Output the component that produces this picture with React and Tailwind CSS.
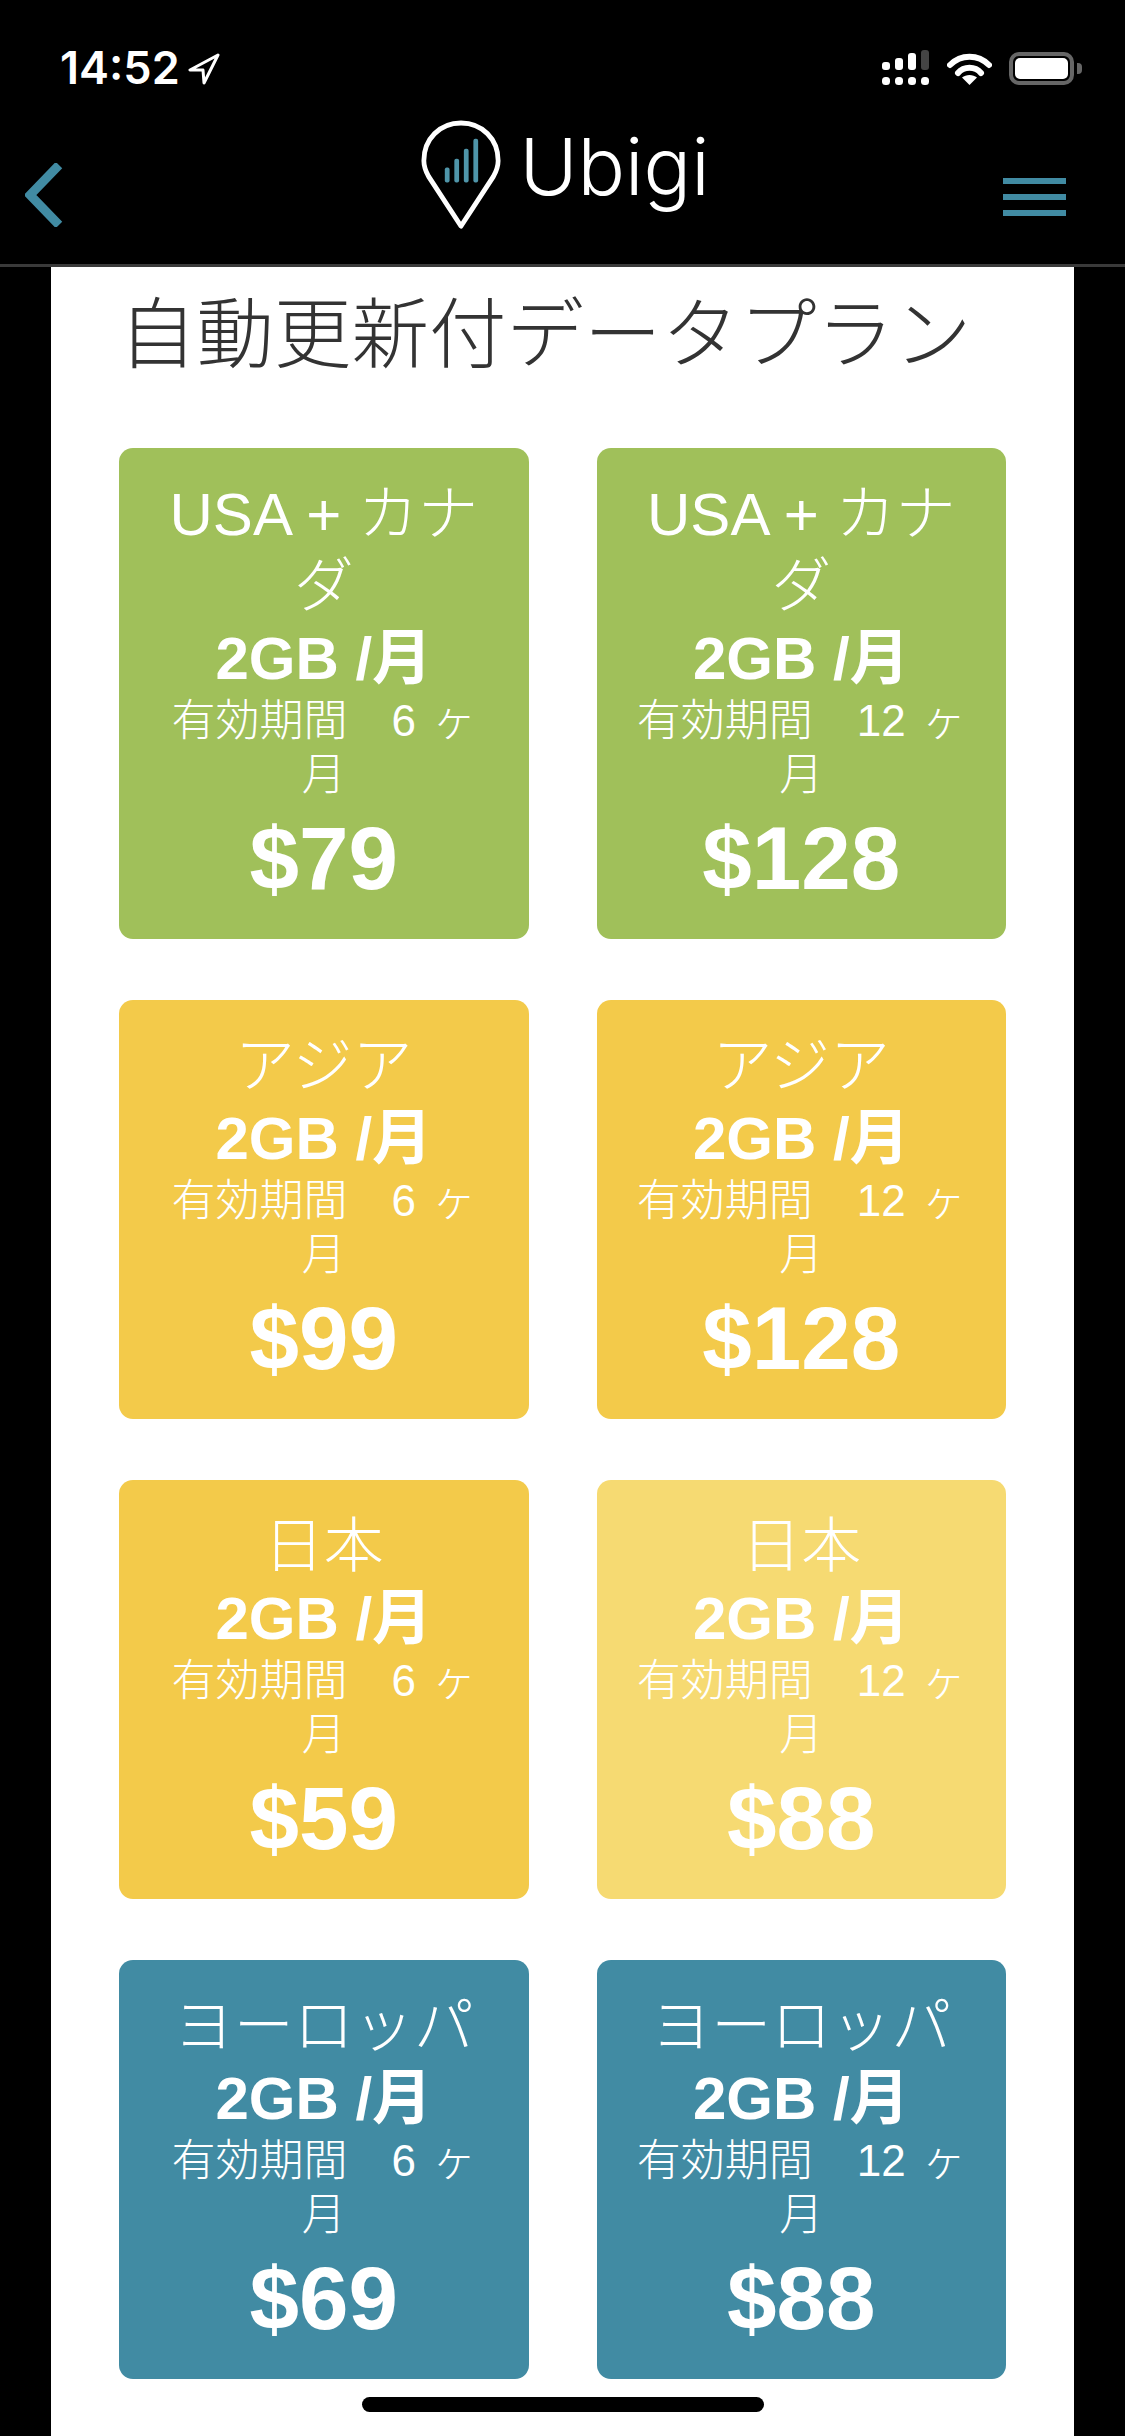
const plans = [
  { title: "USA + カナダ", months: 6, price: "$79", bg: "bg-[#a0c05a]" },
  { title: "USA + カナダ", months: 12, price: "$128", bg: "bg-[#a0c05a]" },
  { title: "アジア", months: 6, price: "$99", bg: "bg-[#f3ca4a]" },
  { title: "アジア", months: 12, price: "$128", bg: "bg-[#f3ca4a]" },
  { title: "日本", months: 6, price: "$59", bg: "bg-[#f3ca4a]" },
  { title: "日本", months: 12, price: "$88", bg: "bg-[#f6da72]" },
  { title: "ヨーロッパ", months: 6, price: "$69", bg: "bg-[#418ba3]" },
  { title: "ヨーロッパ", months: 12, price: "$88", bg: "bg-[#418ba3]" },
];

function PlanCard({ title, months, price, bg }) {
  return (
    <div className={`${bg} rounded-[14px] px-[34px] pt-[31px] pb-[25px] text-center text-white`}>
      <div className="text-[60px] leading-[72px] font-light">{title}</div>
      <div className="text-[60px] leading-[71px] font-bold">2GB /月</div>
      <div className="text-[44px] leading-[54px] font-light [word-spacing:4px]">有効期間　{months} ヶ月</div>
      <div className="text-[89px] leading-[112px] font-bold">{price}</div>
    </div>
  );
}

function StatusIcons() {
  return (
    <div className="flex items-start mr-[43px]">
      <svg width="47" height="35" viewBox="0 0 47 35" className="mr-[18px]">
        <rect x="0" y="12" width="8" height="8" rx="3" fill="#fff" />
        <rect x="13" y="8" width="8" height="12" rx="3" fill="#fff" />
        <rect x="26" y="3" width="8" height="17" rx="3" fill="#fff" />
        <rect x="39" y="0" width="8" height="20" rx="3" fill="#444" />
        {[0, 13, 26, 39].map((x) => (
          <rect key={x} x={x} y="27" width="8" height="8" rx="3.5" fill="#fff" />
        ))}
      </svg>
      <svg width="45" height="35" viewBox="0 0 45 35" className="mt-[2px] mr-[17px]">
        <path d="M3 13 C14 2 31 2 42 13" fill="none" stroke="#fff" strokeWidth="6" strokeLinecap="round" />
        <path d="M11 21 C17 14 28 14 34 21" fill="none" stroke="#fff" strokeWidth="6" strokeLinecap="round" />
        <path d="M22.5 33 L15 25.500 C19 22 26 22 30 25.500 Z" fill="#fff" />
      </svg>
      <div className="flex items-center mt-[2px]">
        <div className="w-[65px] h-[33px] rounded-[10px] border-[4px] border-[#666] p-[2px]">
          <div className="w-full h-full rounded-[5px] bg-white" />
        </div>
        <div className="ml-[3px] w-[5px] h-[11px] rounded-r-[4px] bg-[#666]" />
      </div>
    </div>
  );
}

function Pin() {
  return (
    <svg width="80" height="111" viewBox="0 0 84 112" preserveAspectRatio="none" className="shrink-0 mt-[1px]">
      <path
        d="M42 107 L8 57 C4 50 3 46 3 41 C3 19 20 3 42 3 C64 3 81 19 81 41 C81 46 80 50 76 57 Z"
        fill="none"
        stroke="#fff"
        strokeWidth="5"
        strokeLinejoin="round"
      />
      <rect x="25" y="48" width="5" height="15" rx="2" fill="#4f95a9" />
      <rect x="35" y="39" width="5" height="24" rx="2" fill="#4f95a9" />
      <rect x="45" y="29" width="5" height="34" rx="2" fill="#4f95a9" />
      <rect x="55" y="19" width="5" height="44" rx="2" fill="#4f95a9" />
    </svg>
  );
}

export default function App() {
  return (
    <div
      className="relative h-[2436px] overflow-hidden bg-black"
      style={{ fontFamily: '"Liberation Sans", "Noto Sans CJK JP", sans-serif' }}
    >
      <div className="flex h-[119px] items-start justify-between pt-[50px]">
        <div className="ml-[60px] flex items-start">
          <span className="text-[45px] leading-[35px] font-semibold text-white" style={{ fontFamily: "Inter, sans-serif" }}>14:52</span>
          <svg width="32" height="32" viewBox="0 0 32 32" className="ml-[8px] mt-[3px]">
            <path d="M30 2 L2 17 L15 17 L16 30 Z" fill="none" stroke="#fff" strokeWidth="3" strokeLinejoin="round" />
          </svg>
        </div>
        <StatusIcons />
      </div>

      <div className="grid h-[148px] grid-cols-[1fr_auto_1fr] border-b-[3px] border-[#3a3a3a]">
        <div className="pl-[25px] pt-[44px]">
          <svg width="38" height="64" viewBox="0 0 38 64">
            <path d="M34 2 L5 32 L34 62" fill="none" stroke="#418ba3" strokeWidth="9" />
          </svg>
        </div>
        <div className="flex items-start pl-[6px]">
          <Pin />
          <span className="ml-[18px] mt-[-3px] text-[79px] leading-[100px] font-light text-white" style={{ fontFamily: "Inter, sans-serif" }}>Ubigi</span>
        </div>
        <div className="flex justify-end pr-[59px] pt-[59px]">
          <div className="flex w-[63px] flex-col gap-[10px]">
            <div className="h-[6px] bg-[#418ba3]" />
            <div className="h-[6px] bg-[#418ba3]" />
            <div className="h-[6px] bg-[#418ba3]" />
          </div>
        </div>
      </div>

      <main className="mx-[51px] min-h-[2200px] bg-white px-[68px]">
        <h1 className="pt-[8px] pb-[53px] text-[77.5px] leading-[120px] font-light whitespace-nowrap text-[#333]">
          自動更新付データプラン
        </h1>
        <div className="grid grid-cols-2 gap-x-[68px] gap-y-[61px]">
          {plans.map((p, i) => (
            <PlanCard key={i} {...p} />
          ))}
        </div>
      </main>

      <div className="absolute left-[362px] top-[2397px] h-[15px] w-[402px] rounded-full bg-black" />
    </div>
  );
}
